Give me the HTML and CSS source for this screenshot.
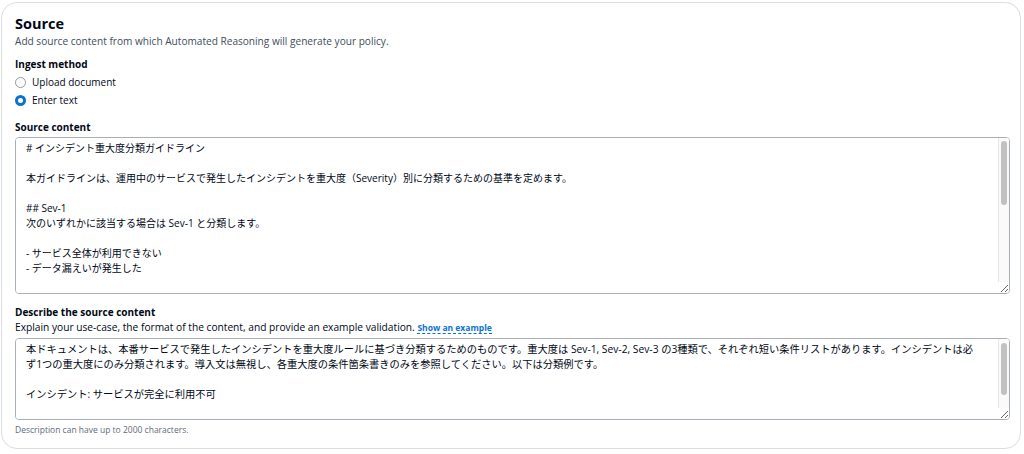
FILE: index.html
```html
<!DOCTYPE html>
<html lang="ja">
<head>
  <meta charset="UTF-8">
  <meta name="viewport" content="width=device-width, initial-scale=1.0">
  <title>Source</title>
  <link rel="stylesheet" href="styles.css">
</head>
<body>
<section class="card">
  <h2 class="card__title">Source</h2>
  <p class="card__desc">Add source content from which Automated Reasoning will generate your policy.</p>

  <div class="field field--ingest">
    <span class="field__label">Ingest method</span>
    <label class="radio">
      <input type="radio" name="ingest" value="upload">
      <span>Upload document</span>
    </label>
    <label class="radio">
      <input type="radio" name="ingest" value="text" checked>
      <span>Enter text</span>
    </label>
  </div>

  <div class="field field--source">
    <label class="field__label" for="source">Source content</label>
    <div class="textarea-wrap">
      <textarea id="source" class="textarea textarea--source"># インシデント重大度分類ガイドライン

本ガイドラインは、運用中のサービスで発生したインシデントを重大度（Severity）別に分類するための基準を定めます。

## Sev-1
次のいずれかに該当する場合は Sev-1 と分類します。

- サービス全体が利用できない
- データ漏えいが発生した

## Sev-2
次のいずれかに該当する場合は Sev-2 と分類します。

- 一部の機能が利用できない
- 応答時間が大幅に悪化している

## Sev-3
次のいずれかに該当する場合は Sev-3 と分類します。

- 表示の軽微な不具合がある
- 回避策が存在する
</textarea>
      <span class="scrollbar" aria-hidden="true"><span class="scrollbar__thumb scrollbar__thumb--source"></span></span>
    </div>
  </div>

  <div class="field field--describe">
    <label class="field__label" for="describe">Describe the source content</label>
    <p class="field__desc">Explain your use-case, the format of the content, and provide an example validation. <a href="#" class="info-link">Show an example</a></p>
    <div class="textarea-wrap">
      <textarea id="describe" class="textarea textarea--describe">本ドキュメントは、本番サービスで発生したインシデントを重大度ルールに基づき分類するためのものです。重大度は Sev-1, Sev-2, Sev-3 の3種類で、それぞれ短い条件リストがあります。インシデントは必ず1つの重大度にのみ分類されます。導入文は無視し、各重大度の条件箇条書きのみを参照してください。以下は分類例です。

インシデント: サービスが完全に利用不可

分類: Sev-1

インシデント: 一部機能の応答遅延
分類: Sev-2</textarea>
      <span class="scrollbar" aria-hidden="true"><span class="scrollbar__thumb scrollbar__thumb--describe"></span></span>
    </div>
    <p class="field__hint">Description can have up to 2000 characters.</p>
  </div>
</section>
</body>
</html>
```

FILE: styles.css
```css
body {
  margin: 0;
  background: #fff;
  color: #000716;
  font-family: "Open Sans", "Noto Sans CJK JP", sans-serif;
  font-size: 10px;
}

.card {
  margin: 2px 3px 0 1px;
  height: 447px;
  box-sizing: border-box;
  padding: 11px 10px 0 13px;
  border: 1px solid #dadde1;
  border-radius: 16px;
}

.card__title {
  margin: 0;
  font-size: 14.5px;
  line-height: 20px;
  font-weight: 700;
}

.card__desc {
  margin: 0;
  font-size: 10.1px;
  line-height: 14px;
  color: #414d5c;
}

.field__label {
  display: block;
  font-weight: 700;
  line-height: 14px;
}

.field--ingest {
  margin-top: 9px;
}

.field--ingest .field__label {
  margin-bottom: 2px;
}

.radio {
  display: flex;
  align-items: center;
  gap: 6px;
  height: 18px;
}

.radio input {
  appearance: none;
  margin: 0;
  width: 11px;
  height: 11px;
  border: 1px solid #8d99a8;
  border-radius: 50%;
  box-sizing: border-box;
  background: #fff;
}

.radio input:checked {
  border: 3px solid #0972d3;
}

.field--source {
  margin-top: 11px;
}

.field--describe {
  margin-top: 11px;
}

.field__desc {
  margin: 1px 0 0;
  font-size: 10.2px;
  line-height: 14px;
}

.info-link {
  color: #0972d3;
  font-size: 8.5px;
  font-weight: 700;
  text-decoration: none;
  border-bottom: 1px dashed #0972d3;
}

.textarea-wrap {
  position: relative;
  margin-top: 3px;
}

.textarea {
  display: block;
  width: 100%;
  box-sizing: border-box;
  margin: 0;
  padding: 3px 12px 3px 10px;
  border: 1px solid #a9afb7;
  border-radius: 4px;
  font-family: inherit;
  font-size: 10px;
  line-height: 15px;
  color: #000716;
  resize: vertical;
  overflow-y: auto;
}

.textarea--source {
  height: 157px;
}

.textarea--describe {
  height: 82px;
  font-size: 10.25px;
  padding-right: 31px;
}

/* drawn scrollbar, the headless browser hides the native one */
.scrollbar {
  position: absolute;
  top: 1px;
  right: 1px;
  bottom: 12px;
  width: 10px;
  background: #fafafa;
  border-left: 1px solid #e8e8e8;
  border-top-right-radius: 3px;
}

.scrollbar__thumb {
  position: absolute;
  left: 2px;
  width: 6px;
  border-radius: 3px;
  background: #c1c1c1;
}

.scrollbar__thumb--source {
  top: 3px;
  height: 64px;
}

.scrollbar__thumb--describe {
  top: 4px;
  height: 52px;
}

.field__hint {
  margin: 4px 0 0;
  font-size: 8.5px;
  line-height: 12px;
  color: #5f6b7a;
}
```
